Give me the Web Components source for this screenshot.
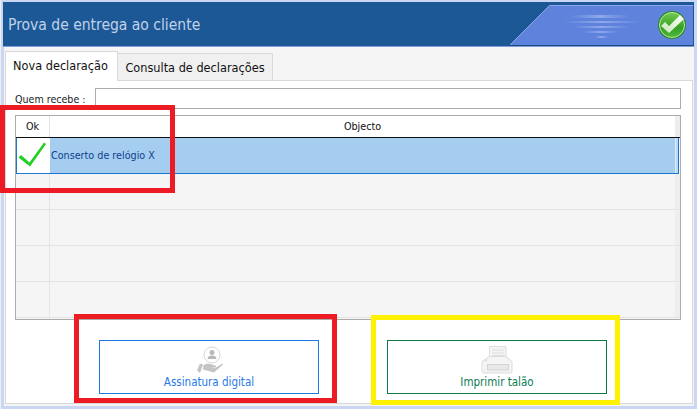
<!DOCTYPE html>
<html>
<head>
<meta charset="utf-8">
<title>Prova de entrega ao cliente</title>
<style>
  html, body { margin: 0; padding: 0; height: 100%; overflow: hidden; }
  body { font-family: "DejaVu Sans", sans-serif; font-stretch: condensed; }
</style>
</head>
<body>
<delivery-window></delivery-window>

<script>
class TitleBar extends HTMLElement {
  constructor() {
    super();
    this.attachShadow({ mode: 'open' });
    this.shadowRoot.innerHTML = `
      <style>
        :host {
          display: flex;
          align-items: center;
          box-sizing: border-box;
          height: 45px;
          margin-left: -1px;
          background: #1c5896;
          border-bottom: 1px solid #7f9fdc;
          position: relative;
          overflow: hidden;
        }
        .title {
          margin-left: 5px;
          margin-top: 2px;
          color: #c0d2e8;
          font: condensed 15.5px "DejaVu Sans", sans-serif;
        }
        svg { position: absolute; right: 0; top: 0; }
      </style>
      <span class="title"><slot></slot></span>
      <svg width="185" height="44" viewBox="0 0 185 44">
        <defs>
          <linearGradient id="ball" x1="0" y1="0" x2="0" y2="1">
            <stop offset="0" stop-color="#6fcb4c"/>
            <stop offset="0.6" stop-color="#36a024"/>
            <stop offset="1" stop-color="#4cb838"/>
          </linearGradient>
          <linearGradient id="tick" x1="0" y1="1" x2="1" y2="0">
            <stop offset="0" stop-color="#c4e6b6"/>
            <stop offset="1" stop-color="#ffffff"/>
          </linearGradient>
          <linearGradient id="streak">
            <stop offset="0" stop-color="#8fa8ec" stop-opacity="0"/>
            <stop offset="0.5" stop-color="#8fa8ec"/>
            <stop offset="1" stop-color="#8fa8ec" stop-opacity="0"/>
          </linearGradient>
        </defs>
        <polygon points="1,43 40.500,3.500 184,3.500 184,43" fill="#5f82dc"/>
        <path d="M1 43L40.500 3.500H184" fill="none" stroke="#8fa8ea"/>
        <path d="M0 43.500H185" stroke="#17497e"/>
        <g fill="url(#streak)">
          <rect x="61" y="13" width="60" height="3"/>
          <rect x="54" y="19" width="78" height="2"/>
          <rect x="63" y="24" width="58" height="2"/>
          <rect x="74" y="29" width="36" height="2"/>
          <rect x="86" y="34" width="13" height="2"/>
        </g>
        <circle cx="163" cy="23" r="14" fill="#2b8a20"/>
        <circle cx="163" cy="23" r="12.500" fill="url(#ball)" stroke="#bfe6ae"/>
        <polygon points="152,24 156,20 160,24 171,13 175,17 160,31" fill="url(#tick)"/>
      </svg>
    `;
  }
}

class TabStrip extends HTMLElement {
  constructor() {
    super();
    this.attachShadow({ mode: 'open' });
    this.shadowRoot.innerHTML = `
      <style>
        :host {
          display: flex;
          align-items: flex-end;
          height: 29px;
          padding-left: 1px;
          position: relative;
          z-index: 1;
          font: condensed 12.600px "DejaVu Sans", sans-serif;
          color: #111;
        }
        .tab {
          box-sizing: border-box;
          display: flex;
          align-items: center;
          justify-content: center;
          border: 1px solid #d9d9d9;
        }
        .active {
          width: 113px;
          height: 30px;
          background: #fff;
          border-bottom: none;
          margin-bottom: -1px;
          padding: 0 2px 3px 0;
        }
        .other {
          width: 155px;
          height: 27px;
          background: #f0f0f0;
          border-left: none;
          border-bottom: none;
        }
      </style>
      <div class="tab active">Nova declaração</div>
      <div class="tab other">Consulta de declarações</div>
    `;
  }
}

class RecipientField extends HTMLElement {
  constructor() {
    super();
    this.attachShadow({ mode: 'open' });
    this.shadowRoot.innerHTML = `
      <style>
        :host {
          display: flex;
          align-items: center;
          gap: 9px;
          font: condensed 10.600px "DejaVu Sans", sans-serif;
          color: #222;
        }
        label { width: 71px; white-space: nowrap; }
        .input {
          flex: 1;
          box-sizing: border-box;
          height: 21px;
          background: #fff;
          border: 1px solid #ababab;
        }
      </style>
      <label>Quem recebe :</label>
      <div class="input"></div>
    `;
  }
}

class ObjectTable extends HTMLElement {
  constructor() {
    super();
    this.attachShadow({ mode: 'open' });
    this.shadowRoot.innerHTML = `
      <style>
        :host {
          display: block;
          box-sizing: border-box;
          height: 205px;
          border: 1px solid #ababab;
          background: #f5f5f5;
          font: condensed 10.700px "DejaVu Sans", sans-serif;
          color: #111;
          overflow: hidden;
        }
        .row {
          display: grid;
          grid-template-columns: 34px 1fr 5px;
          height: 36px;
          box-sizing: border-box;
          border-bottom: 1px solid #e4e4e4;
        }
        .row > div { display: flex; align-items: center; }
        .row > div:first-child { border-right: 1px solid #e4e4e4; }
        .row > div:last-child { background: #eeeeee; }
        .head {
          height: 22px;
          background: #fff;
          border-bottom: 1px solid #111;
        }
        .head > div { justify-content: center; }
        .selected {
          margin-right: 1px;
          border: 1px solid #1b78d0;
          border-top: none;
          grid-template-columns: 33px 1fr 3px;
          color: #12408e;
        }
        .selected > div:first-child { background: #fff; border-right: none; }
        .selected > div:nth-child(2) { background: #a4cdf0; padding-left: 1px; }
        .selected > div:last-child { background: #b9d9f4; border-left: 1px solid #dcebf8; }
      </style>
      <div class="row head"><div>Ok</div><div>Objecto</div><div></div></div>
      <div class="row selected">
        <div>
          <svg width="33" height="35" viewBox="0 0 33 35">
            <path d="M1.500 19.500L4 17l8.500 7.500L27 4.500l2 1.500L13 28.500z" fill="#22cf22"/>
          </svg>
        </div>
        <div>Conserto de relógio X</div>
        <div></div>
      </div>
      <div class="row"><div></div><div></div><div></div></div>
      <div class="row"><div></div><div></div><div></div></div>
      <div class="row"><div></div><div></div><div></div></div>
      <div class="row"><div></div><div></div><div></div></div>
    `;
  }
}

class ActionButton extends HTMLElement {
  constructor() {
    super();
    this.attachShadow({ mode: 'open' });
    this.shadowRoot.innerHTML = `
      <style>
        :host {
          display: flex;
          flex-direction: column;
          align-items: center;
          box-sizing: border-box;
          width: 220px;
          height: 54px;
          padding-top: 2px;
          background: #fff;
          border: 1px solid var(--accent);
          color: var(--text);
          font: condensed 11.500px/13px "DejaVu Sans", sans-serif;
        }
        .icon { display: block; height: 33px; }
      </style>
      <div class="icon"><slot name="icon"></slot></div>
      <span><slot></slot></span>
    `;
  }
}

class FrameMark extends HTMLElement {
  constructor() {
    super();
    this.attachShadow({ mode: 'open' });
    this.shadowRoot.innerHTML = `
      <style>
        :host {
          display: block;
          position: absolute;
          z-index: 2;
          box-sizing: border-box;
          border: 5px solid var(--mark);
          pointer-events: none;
        }
      </style>
    `;
  }
}

class DeliveryWindow extends HTMLElement {
  constructor() {
    super();
    this.attachShadow({ mode: 'open' });
    this.shadowRoot.innerHTML = `
      <style>
        :host {
          display: block;
          position: relative;
          box-sizing: border-box;
          width: 697px;
          height: 409px;
          padding: 2px 3px 3px 3px;
          border-left: 1px solid #f0f0f0;
          background: #c9d6f4;
        }
        .body {
          display: flex;
          flex-direction: column;
          height: 359px;
          padding: 4px 1px 2px 0;
          box-sizing: border-box;
          background: #f5f5f5;
        }
        .panel {
          flex: 1;
          display: flex;
          flex-direction: column;
          margin-left: 1px;
          padding: 7px 11px 0 9px;
          background: #fff;
          border: 1px solid #d9d9d9;
        }
        object-table { margin-top: 6px; }
        .actions {
          display: flex;
          gap: 68px;
          margin: 20px 0 0 84px;
        }
        action-button svg { display: block; }
      </style>
      <title-bar>Prova de entrega ao cliente</title-bar>
      <div class="body">
        <tab-strip></tab-strip>
        <div class="panel">
          <recipient-field></recipient-field>
          <object-table></object-table>
          <div class="actions">
            <action-button style="--accent:#1b78e6;--text:#2a7ae8">
              <svg slot="icon" width="40" height="33" viewBox="0 0 40 33">
                <circle cx="23" cy="12" r="8" fill="none" stroke="#d8d8d8"/>
                <circle cx="23" cy="9.500" r="2.500" fill="#b8b8b8"/>
                <path d="M18.500 16c0-2.500 2-3.500 4.500-3.500s4.500 1 4.500 3.500z" fill="#b8b8b8"/>
                <path d="M8 27.500l3-7 3 1-3 8.500zM14.500 22c3-2 6-1.500 8.500-.5l3.500 1c1 1 .5 2-1 2l-4-.5 4.500 1 7.500-4.500 .5 1-9 8-11-3z" fill="#c4c4c4"/>
              </svg>
              Assinatura digital
            </action-button>
            <action-button style="--accent:#0b7a45;--text:#0b7d55">
              <svg slot="icon" width="40" height="33" viewBox="0 0 40 33">
                <path d="M12.500 14V3.500h16.500V14" fill="#f4f4f4" stroke="#dedede"/>
                <path d="M15 7h12M15 10h12M15 12.500h12" stroke="#dedede"/>
                <path d="M12.500 13.500h16.500l6 5v10a1.500 1.500 0 0 1-1.500 1.500h-27a1.500 1.500 0 0 1-1.500-1.500v-10z" fill="#f4f4f4" stroke="#dcdcdc"/>
                <rect x="10.500" y="21.500" width="21" height="5.500" fill="#e8e8e8" stroke="#d4d4d4"/>
                <rect x="8" y="16.500" width="2" height="2" fill="#dcdcdc"/>
              </svg>
              Imprimir talão
            </action-button>
          </div>
        </div>
      </div>
      <frame-mark style="--mark:#ed1c24;left:-1px;top:105px;width:175px;height:88px"></frame-mark>
      <frame-mark style="--mark:#ed1c24;left:73px;top:314px;width:263px;height:89px"></frame-mark>
      <frame-mark style="--mark:#fff200;left:370px;top:315px;width:249px;height:90px"></frame-mark>
    `;
  }
}

customElements.define('title-bar', TitleBar);
customElements.define('tab-strip', TabStrip);
customElements.define('recipient-field', RecipientField);
customElements.define('object-table', ObjectTable);
customElements.define('action-button', ActionButton);
customElements.define('frame-mark', FrameMark);
customElements.define('delivery-window', DeliveryWindow);
</script>
</body>
</html>
